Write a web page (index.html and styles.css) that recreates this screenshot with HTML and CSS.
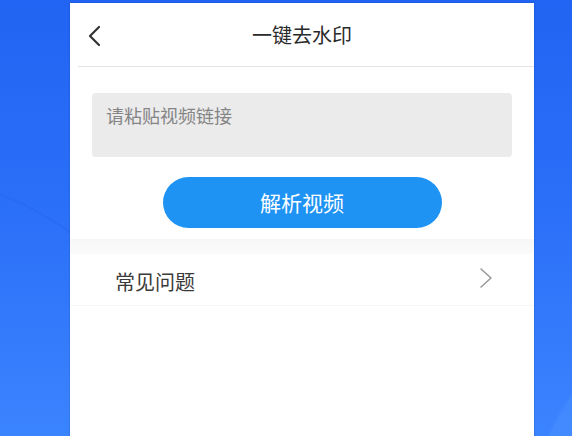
FILE: index.html
```html
<!DOCTYPE html>
<html lang="zh-CN">
<head>
<meta charset="utf-8">
<title>一键去水印</title>
<link rel="stylesheet" href="styles.css">
</head>
<body>
<div class="screen">
  <header class="topbar">
    <span class="back">
      <svg width="14" height="22" viewBox="0 0 14 22"><path d="M12 2 L3 11 L12 20" fill="none" stroke="#333" stroke-width="2.2" stroke-linecap="round" stroke-linejoin="round"/></svg>
    </span>
    <h1 class="title">一键去水印</h1>
  </header>
  <div class="divider"></div>
  <section class="form">
    <div class="input">请粘贴视频链接</div>
    <button class="parse">解析视频</button>
  </section>
  <div class="band"></div>
  <div class="row">
    <span class="row-label">常见问题</span>
    <svg class="chev" width="14" height="22" viewBox="0 0 14 22"><path d="M2 2 L12 11 L2 20" fill="none" stroke="#9a9a9a" stroke-width="1.6" stroke-linecap="round" stroke-linejoin="round"/></svg>
  </div>
  <div class="row-line"></div>
</div>
</body>
</html>
```

FILE: styles.css
```css
html, body {
  margin: 0;
  padding: 0;
}
body {
  width: 572px;
  height: 436px;
  overflow: hidden;
  font-family: "Noto Sans CJK SC", "Noto Sans", sans-serif;
  background:
    radial-gradient(circle 330px at -120px 500px, rgba(60,130,255,0) 99%, rgba(20,80,220,0.18) 99.5%, rgba(20,80,220,0) 100%),
    radial-gradient(circle 300px at 820px 560px, rgba(80,150,255,0.35) 99%, rgba(80,150,255,0) 100%),
    linear-gradient(180deg, #2164f3 0%, #2b70f8 50%, #3b84ff 100%);
}
.screen {
  margin: 3px 0 0 70px;
  width: 464px;
  height: 440px;
  background: #fff;
  box-shadow: 0 0 2px rgba(0,0,0,0.2);
}
.topbar {
  height: 63px;
  display: flex;
  align-items: center;
  justify-content: center;
  position: relative;
}
.back {
  position: absolute;
  left: 17px;
  top: 22px;
  display: flex;
}
.title {
  margin: 0;
  font-size: 20px;
  font-weight: 400;
  color: #2a2a2a;
  line-height: 1;
  padding-top: 1px;
}
.divider {
  height: 1px;
  margin-left: 8px;
  background: #e3e3e3;
}
.form {
  padding: 26px 22px 0;
  display: flex;
  flex-direction: column;
  align-items: center;
}
.input {
  align-self: stretch;
  height: 64px;
  box-sizing: border-box;
  background: #ebebeb;
  border-radius: 4px;
  padding: 10px 14px;
  font-size: 18px;
  line-height: 24px;
  color: #858585;
}
.parse {
  margin-top: 20px;
  width: 279px;
  height: 51px;
  border: none;
  border-radius: 26px;
  background: #1f93f4;
  color: #fff;
  font-family: inherit;
  font-size: 21px;
  padding: 0 0 2px;
}
.band {
  margin-top: 11px;
  height: 15px;
  background: linear-gradient(#f6f6f6, #fbfbfb);
}
.row {
  height: 51px;
  display: flex;
  align-items: center;
  justify-content: space-between;
  padding: 0 41px 0 45px;
}
.row-label {
  font-size: 20px;
  color: #3a3a3a;
  padding-top: 4px;
}
.chev {
  margin-top: -4px;
}
.row-line {
  height: 1px;
  background: #f7f7f7;
}
```
